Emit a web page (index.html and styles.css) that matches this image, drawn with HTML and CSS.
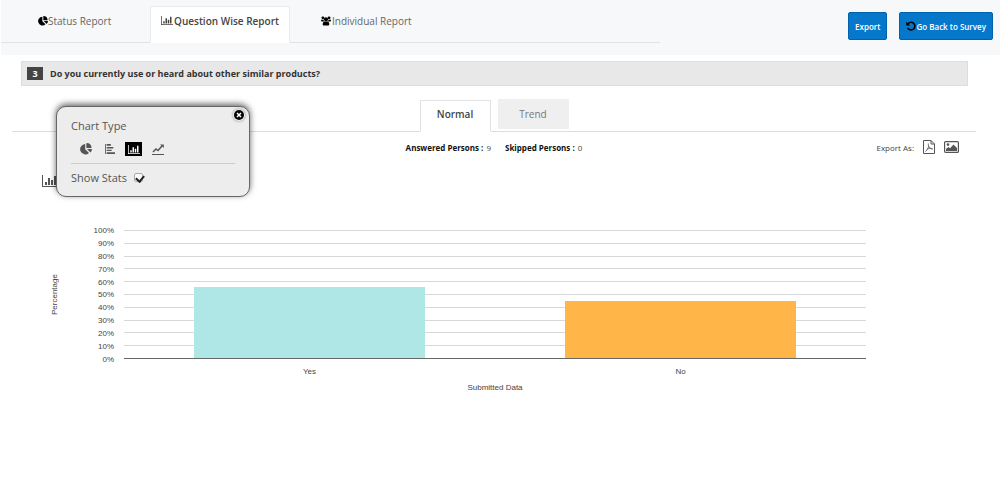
FILE: index.html
```html
<!DOCTYPE html>
<html lang="en">
<head>
<meta charset="utf-8">
<title>Question Wise Report</title>
<link rel="stylesheet" href="styles.css">
</head>
<body>
<svg class="defs" aria-hidden="true">
  <symbol id="pie" viewBox="0 0 12 12"><path d="M5.2 1v5.2L9 9.9A5.2 5.2 0 1 1 5.2 1z"/><path d="M6.4 0A5.4 5.4 0 0 1 11.6 5L6.4 5z"/><path d="M7 6.1h5a5.4 5.4 0 0 1-1.6 3.5z"/></symbol>
  <symbol id="columns" viewBox="0 0 16 12"><path d="M0 0h1v11h15v1H0zM3 7h2v3H3zM6 3h2v7H6zM9 5h2v5H9zM12 1h2v9h-2z"/></symbol>
  <symbol id="rows" viewBox="0 0 12 12"><path d="M0 0h1v12H0zM2 0h5v2H2zM2 3.500h8v2H2zM2 7h6v1.500H2zM2 10h10v2H2z"/></symbol>
  <symbol id="line" viewBox="0 0 12 12"><path d="M0 11h12v1H0z"/><path d="M1 9l3-3 2 1.500L10 3" fill="none" stroke="currentColor" stroke-width="1.500"/><path d="M8 1.500h3.800V5z"/></symbol>
  <symbol id="group" viewBox="0 0 12 12"><circle cx="2.300" cy="2.200" r="1.700"/><circle cx="9.700" cy="2.200" r="1.700"/><circle cx="6" cy="4" r="2.500"/><path d="M0 4.500h3q0 1.500 1 2.200H1.200Q0 6.700 0 5.500zM12 4.500H9q0 1.500-1 2.200h2.800q1.200 0 1.200-1.200zM4 6.500h4q2 .5 2 3.500 0 1.500-1.500 1.500h-5Q2 11.500 2 10q0-3 2-3.500z"/></symbol>
  <symbol id="undo" viewBox="0 0 12 12"><path d="M2.200 3.600a4.600 4.600 0 1 1-.2 4.700" fill="none" stroke="currentColor" stroke-width="2"/><path d="M.3.800v4.700H5z"/></symbol>
  <symbol id="pdf" viewBox="0 0 12 14"><path d="M.5.500h7.500l3.500 3.500v9.500H.500zM8 .5V4h3.500" fill="none" stroke="currentColor"/><path d="M5.300 3.500c-.4 2 .8 4.500 4 6M5.800 6C5 9 3.500 11 2.300 11.500M3.800 9.300c2-.9 4-1.200 6-.5" fill="none" stroke="currentColor" stroke-width=".8"/></symbol>
  <symbol id="image" viewBox="0 0 15 12"><rect x=".6" y=".6" width="13.800" height="10.800" rx="1" fill="none" stroke="currentColor" stroke-width="1.200"/><circle cx="4" cy="3.600" r="1.300"/><path d="M2 10V8l2.300-2L6 7.300 9.500 3.500 13 7v3z"/></symbol>
  <symbol id="close" viewBox="0 0 12 12"><circle cx="6" cy="6" r="5"/><path d="M4 4l4 4M8 4l-4 4" stroke="#fff" stroke-width="1.500"/></symbol>
</svg>

<header class="topbar">
  <nav class="report-tabs">
    <a class="report-tab" href="#status"><svg class="icon-s"><use href="#pie"/></svg>Status Report</a>
    <a class="report-tab active" href="#question"><svg class="icon-w"><use href="#columns"/></svg>Question Wise Report</a>
    <a class="report-tab" href="#individual"><svg class="icon-s"><use href="#group"/></svg>Individual Report</a>
  </nav>
  <div class="actions">
    <button class="btn" type="button">Export</button>
    <button class="btn" type="button"><svg class="icon-s undo"><use href="#undo"/></svg>Go Back to Survey</button>
  </div>
</header>

<main>
  <h1 class="question"><span class="number">3</span>Do you currently use or heard about other similar products?</h1>

  <section class="report">
    <div class="view-tabs">
      <button class="view-tab active" type="button">Normal</button>
      <button class="view-tab" type="button">Trend</button>
    </div>

    <div class="summary">
      <p class="counts"><span><b>Answered Persons :</b> 9</span><span><b>Skipped Persons :</b> 0</span></p>
      <div class="export-as">
        <span>Export As:</span>
        <button class="icon-btn" type="button" aria-label="PDF"><svg class="icon-pdf"><use href="#pdf"/></svg></button>
        <button class="icon-btn" type="button" aria-label="Image"><svg class="icon-image"><use href="#image"/></svg></button>
      </div>
    </div>

    <button class="icon-btn chart-toggle" type="button" aria-label="Chart options"><svg class="icon-toggle"><use href="#columns"/></svg></button>

    <div class="popover">
      <button class="icon-btn close" type="button" aria-label="Close"><svg class="icon-m"><use href="#close"/></svg></button>
      <p class="popover-title">Chart Type</p>
      <div class="types">
        <button class="type" type="button" aria-label="Pie"><svg class="icon-m"><use href="#pie"/></svg></button>
        <button class="type" type="button" aria-label="Bar"><svg class="icon-s"><use href="#rows"/></svg></button>
        <button class="type active" type="button" aria-label="Column"><svg class="icon-w"><use href="#columns"/></svg></button>
        <button class="type" type="button" aria-label="Line"><svg class="icon-m"><use href="#line"/></svg></button>
      </div>
      <label class="stats">Show Stats <input class="check" type="checkbox" checked></label>
    </div>
  </section>

  <section class="chart">
    <div class="y-title">Percentage</div>
    <div class="y-labels"><span>100%</span><span>90%</span><span>80%</span><span>70%</span><span>60%</span><span>50%</span><span>40%</span><span>30%</span><span>20%</span><span>10%</span><span>0%</span></div>
    <div class="plot">
      <div class="grid"><i></i><i></i><i></i><i></i><i></i><i></i><i></i><i></i><i></i><i></i></div>
      <div class="bars">
        <div class="bar yes" style="height:55.6%"></div>
        <div class="bar no" style="height:44.4%"></div>
      </div>
    </div>
    <div class="x-labels"><span>Yes</span><span>No</span></div>
    <div class="x-title">Submitted Data</div>
  </section>
</main>
</body>
</html>
```
FILE: styles.css
```css
* { box-sizing: border-box; }
body {
  margin: 0;
  background: #fff;
  color: #444;
  font-family: "Open Sans", "Noto Sans", sans-serif;
  font-size: 10px;
}
p, h1 { margin: 0; }
button { font-family: inherit; cursor: pointer; }
svg { display: block; fill: currentColor; flex: none; }
.defs { position: absolute; width: 0; height: 0; }
.icon-s { width: 10px; height: 10px; }
.icon-m { width: 12px; height: 12px; }
.icon-w { width: 12px; height: 9px; }
.icon-pdf { width: 12px; height: 14px; }
.icon-image { width: 15px; height: 12px; }
.icon-toggle { width: 16px; height: 12px; }

.topbar {
  display: flex;
  justify-content: space-between;
  align-items: flex-start;
  height: 55px;
  margin-left: 1px;
  padding-right: 7px;
  background: #f7f8fa;
}
.report-tabs {
  display: flex;
  gap: 30px;
  width: 66.4%;
  height: 43px;
  padding: 6px 0 0 9px;
  border-bottom: 1px solid #e1e2e4;
}
.report-tab {
  display: flex;
  align-items: center;
  justify-content: flex-start;
  gap: 1px;
  height: 37px;
  padding-bottom: 8px;
  color: #666;
  font-size: 10px;
  text-decoration: none;
  border: 1px solid transparent;
}
.report-tab:first-child { width: 110px; padding-left: 27px; gap: 0; }
.report-tab svg { color: #000; }
.report-tab.active {
  justify-content: center;
  width: 140px;
  background: #fff;
  border-color: #e9eaec;
  border-bottom-color: #fff;
  color: #444;
  font-weight: 600;
}
.report-tab.active svg { color: #444; }
.actions { display: flex; gap: 12px; padding-top: 12px; }
.btn {
  display: flex;
  align-items: center;
  height: 28px;
  padding: 0 6px;
  border: 1px solid #0062ad;
  border-radius: 2px;
  background: #0578cc;
  color: #fff;
  font-size: 8px;
  font-weight: 600;
}
.undo { color: #000; }

.question {
  display: flex;
  align-items: center;
  gap: 7px;
  height: 25px;
  margin: 6px 32px 0 21px;
  padding-left: 5px;
  border: 1px solid #ddd;
  background: #e8e8e8;
  color: #333;
  font-size: 9px;
  font-weight: 700;
}
.number {
  width: 16px;
  line-height: 13px;
  background: #444;
  color: #fff;
  text-align: center;
}

.report { position: relative; margin: 13px 24px 0 12px; }
.view-tabs {
  display: flex;
  justify-content: center;
  align-items: flex-start;
  gap: 7px;
  height: 33px;
  border-bottom: 1px solid #ddd;
}
.view-tab {
  width: 71px;
  height: 30px;
  padding: 0;
  border: 0;
  background: #efefef;
  color: #777;
  font-size: 10px;
}
.view-tab.active {
  height: 32px;
  margin-top: 1px;
  padding-bottom: 4px;
  border: 1px solid #e2e2e2;
  border-bottom-color: #fff;
  background: #fff;
  color: #444;
  font-weight: 600;
}
.summary {
  display: grid;
  grid-template-columns: 1fr auto 1fr;
  align-items: center;
  height: 30px;
  padding: 0 17px;
  font-size: 8px;
}
.counts { display: flex; gap: 14px; grid-column: 2; }
.counts b { color: #111; margin-right: 1px; }
.export-as { display: flex; align-items: center; justify-content: flex-end; gap: 9px; }
.icon-btn { padding: 0; border: 0; background: none; color: #555; }
.chart-toggle { display: block; margin: 13px 0 0 30px; }

.popover {
  position: absolute;
  top: 7px;
  left: 44px;
  width: 194px;
  height: 91px;
  padding: 10px 14px 0;
  border: 1px solid #666;
  border-radius: 10px;
  background: #ededed;
  box-shadow: 0 -2px 6px rgba(0, 0, 0, .6);
  color: #555;
}
.close { position: absolute; top: 2px; right: 4px; color: #000; border-radius: 50%; box-shadow: 0 0 3px #888; }
.popover-title { line-height: 18px; font-size: 11px; }
.types {
  display: flex;
  gap: 7px;
  height: 29px;
  padding: 7px 0 0 6px;
  border-bottom: 1px solid #ccc;
}
.type {
  display: flex;
  align-items: center;
  justify-content: center;
  width: 17px;
  height: 14px;
  padding: 0;
  border: 0;
  background: none;
  color: #555;
}
.type.active { background: #000; color: #fff; }
.stats { display: flex; align-items: center; gap: 7px; height: 26px; font-size: 11px; }
.check {
  appearance: none;
  width: 9px;
  height: 9px;
  margin: 1px 0 0;
  border: 1px solid #aaa;
  border-radius: 2px;
  background: #fafafa;
}
.check:checked::after {
  content: "";
  display: block;
  width: 4px;
  height: 6px;
  margin: 0 0 0 2px;
  border: solid #222;
  border-width: 0 2px 2px 0;
  transform: rotate(40deg);
}

.chart {
  display: grid;
  grid-template-columns: 10px 48px 1fr;
  grid-template-rows: 129px 24px auto;
  column-gap: 8px;
  margin: 43px 134px 0 50px;
  font-family: "Liberation Sans", Arial, sans-serif;
  font-size: 8px;
  line-height: 10px;
}
.y-title { writing-mode: vertical-rl; transform: rotate(180deg); text-align: center; }
.y-labels {
  display: flex;
  flex-direction: column;
  justify-content: space-between;
  margin: -4px 2px -6px 0;
  text-align: right;
}
.plot { display: grid; border-bottom: 1px solid #666; }
.grid, .bars { grid-area: 1 / 1; display: flex; }
.grid { flex-direction: column; }
.grid i { flex: 1; border-top: 1px solid #d8d8d8; }
.bars { align-items: flex-end; justify-content: space-around; }
.bar { width: 31%; }
.yes { background: #aee7e5; }
.no { background: #ffb548; }
.x-labels { grid-column: 3; display: flex; align-items: center; padding-top: 2px; text-align: center; }
.x-labels span { flex: 1; }
.x-title { grid-column: 3; text-align: center; }
```
